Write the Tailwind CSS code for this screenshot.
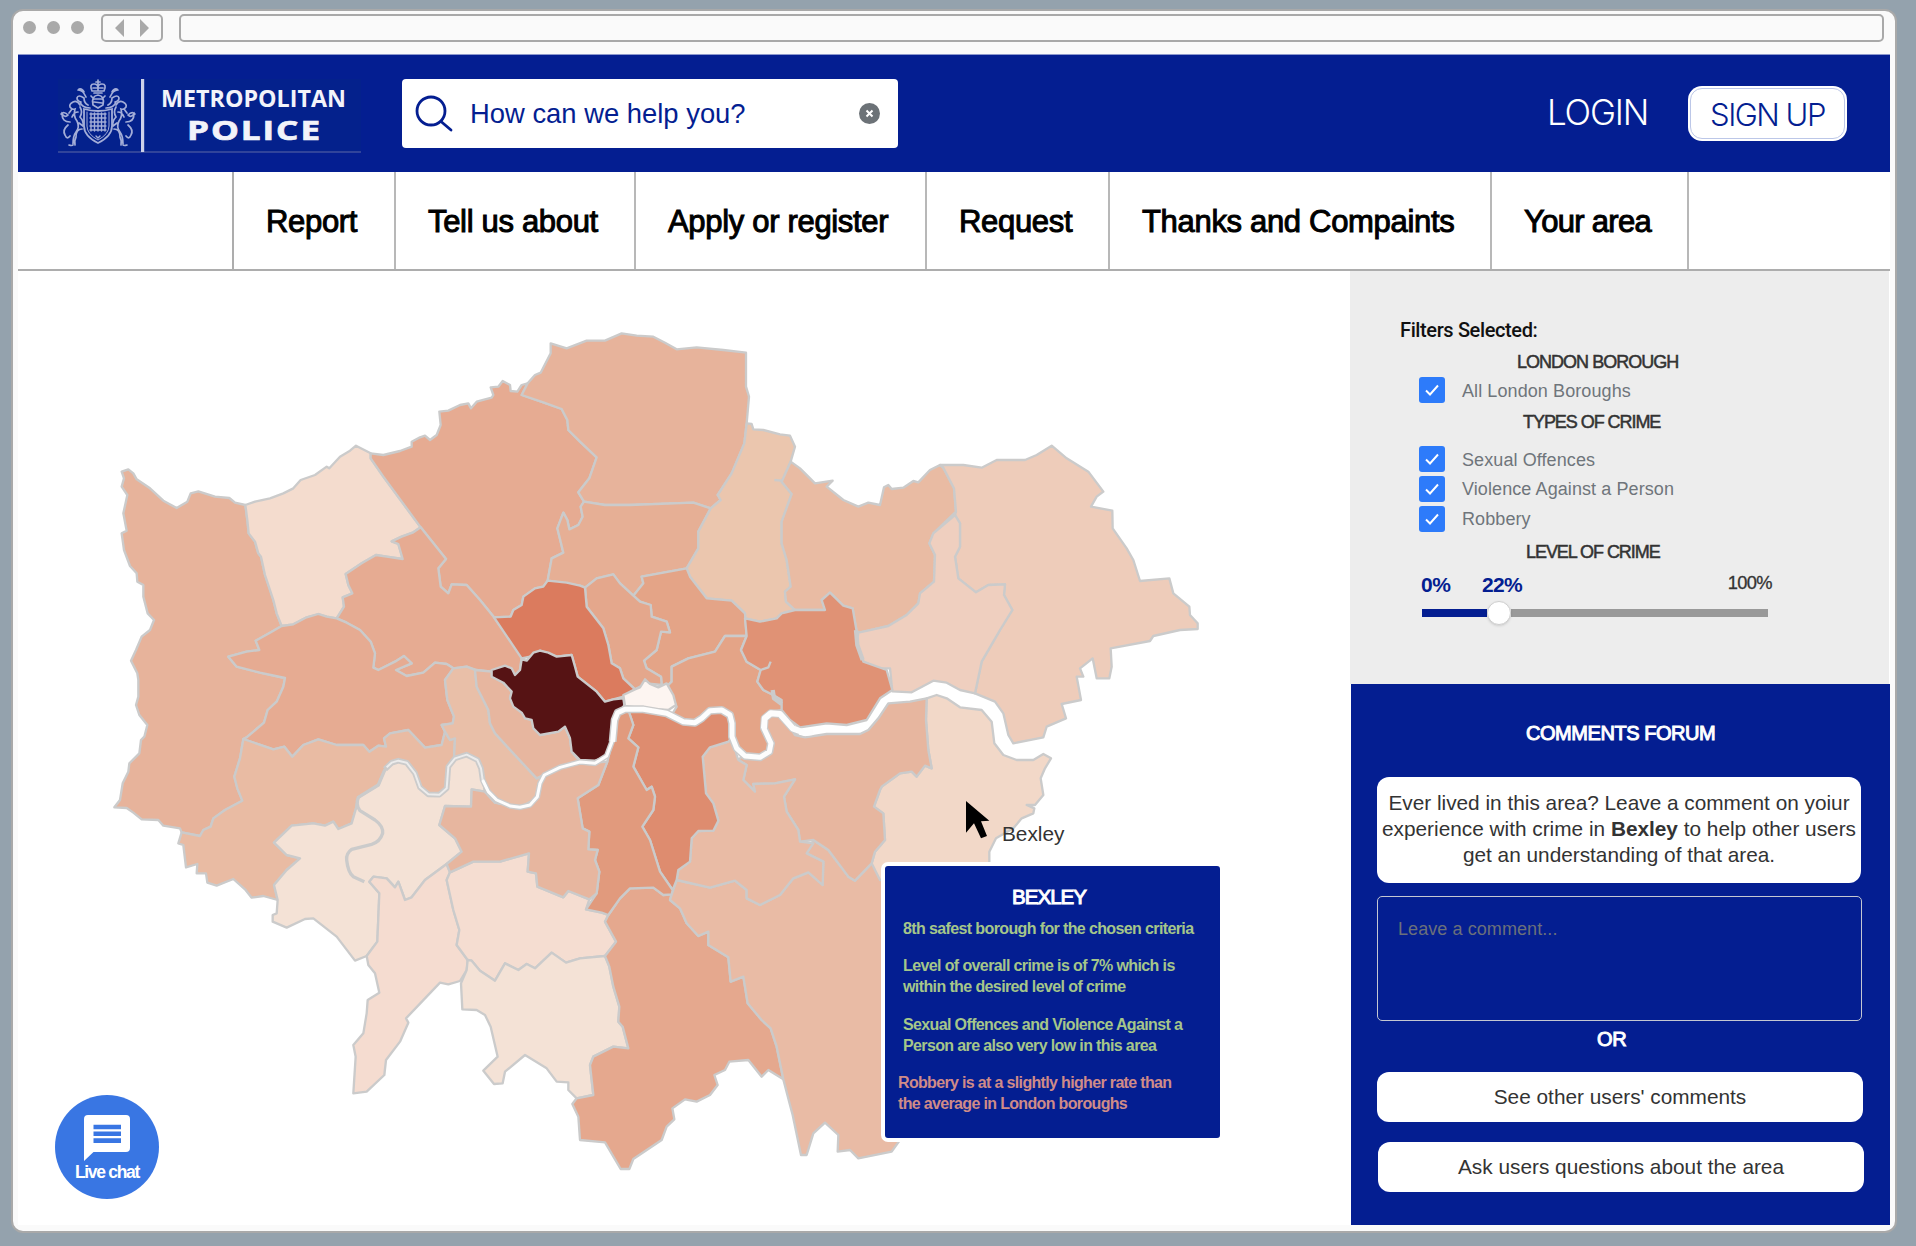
<!DOCTYPE html>
<html lang="en">
<head>
<meta charset="utf-8">
<title>Metropolitan Police - Your area</title>
<script src="https://cdn.jsdelivr.net/npm/@tailwindcss/browser@4"></script>
</head>
<body class="flex h-[1246px] w-[1916px] overflow-hidden bg-[#94a2ad] pt-[9px] pl-[11px] font-['Liberation_Sans',Arial,sans-serif]">
<div class="flex h-[1224px] w-[1886px] flex-col rounded-xl border-2 border-[#a9a9a9] bg-[#fafafa] px-[5px]">

  <!-- browser chrome -->
  <div class="flex h-[43px] shrink-0 items-start pt-[3px] pl-[5px]">
    <div class="mt-[7px] flex gap-[11px]">
      <span class="size-[13px] rounded-full bg-[#a9a9a9]"></span>
      <span class="size-[13px] rounded-full bg-[#a9a9a9]"></span>
      <span class="size-[13px] rounded-full bg-[#a9a9a9]"></span>
    </div>
    <div class="ml-[17px] flex h-7 w-[62px] items-center justify-center rounded-[5px] border-2 border-[#a9a9a9]">
      <svg class="h-[18px] w-[36px]" viewBox="0 0 36 18" fill="#a9a9a9"><path d="M10 0V18L1 9ZM26 0V18L35 9Z"/></svg>
    </div>
    <div class="ml-[16px] h-7 w-[1705px] rounded-[5px] border-2 border-[#a9a9a9]"></div>
  </div>

  <!-- header -->
  <header class="flex h-[118px] w-[1872px] shrink-0 items-start border-t border-[#8d98cd] bg-[#041e91]">
    <svg class="mt-[24px] ml-[40px] h-[74px] w-[304px]" viewBox="0 0 304 74">
      <rect width="303" height="73" fill="#04218c"/>
      <path d="M0 73H303" stroke="#3f519f" stroke-width="1.3"/>
      <rect x="83" width="3.2" height="73" fill="#cdd1e8"/>
      <g fill="none" stroke="#a3add8" stroke-width="1.7" stroke-linecap="round">
        <path d="M40 1v4M38 3h4M34 12q-3-7 2-7q4 0 4 4q0-4 4-4q5 0 2 7zM40 6v6M35 9h10M36 14h8"/>
        <path d="M35 26q-2-9 5-10q7 1 5 10l-5 3zM37 20h6M36 23l8 1M33 17l3 3M47 17l-3 3"/>
        <path d="M26 30q14 4 28 0V47q0 10-14 17Q26 57 26 47Z" stroke-width="1.8"/>
        <path d="M29 33V47q0 8 11 14Q51 55 51 47V33" stroke-width="1"/>
        <path d="M33 34V52M36.500 34V52M40 34V52M43.500 34V52M47 34V52M32 35H48M32 39H48M32 43H48M32 47H48M32 51H48M38 57l2 2 2-2" stroke-width="1.400"/>
        <path d="M30 26q-4-2-4-7q-6-4-7 0q0 3 4 4M28 18q-3-7-8-7M32 29q-8 0-10-6M26 13q-2-4-5-3M50 26q4-2 4-7q6-4 7 0q0 3-4 4M52 18q3-7 8-7M48 29q8 0 10-6M54 13q2-4 5-3"/>
        <path d="M22 26q-3-5-7-3q-4 2-3 5q2 3 5 2q-2 7 2 12q3 6-1 11q-3 4-3 12M15 66q-1 1-4 0M22 28q3 5 0 10q4 4 3 9M24 50q-6 0-6 8q-2 4-1 8M12 43q-8 0-8-8q3 4 6 1q-4-4-7-1M10 46q-6 5-3 10q2 5 5 1M20 33q-4 0-6 5M21 44l4 3M14 30l-3 4"/>
        <path d="M58 26q3-5 7-3q4 2 3 5q-2 3-5 2q2 7-2 12q-3 6 1 11q3 4 3 12M65 66q1 1 4 0M58 28q-3 5 0 10q-4 4-3 9M56 50q6 0 6 8q2 4 1 8M68 43q8 0 8-8q-3 4-6 1q4-4 7-1M70 46q6 5 3 10q-2 5-5 1M60 33q4 0 6 5M59 44l-4 3M66 30l3 4"/>
      </g>
      <g fill="#f2f3fa" font-family="'Open Sans','Noto Sans',sans-serif" font-weight="700">
        <text x="103" y="28" font-size="22.500" textLength="185" lengthAdjust="spacingAndGlyphs">METROPOLITAN</text>
        <text x="129" y="61" font-size="27" textLength="135" letter-spacing="1.500" stroke="#f2f3fa" stroke-width="0.700" lengthAdjust="spacingAndGlyphs">POLICE</text>
      </g>
    </svg>
    <div class="mt-[24px] ml-[40px] flex h-[69px] w-[496px] items-center rounded-[4px] bg-white pl-[13px]">
      <svg class="size-[38px]" viewBox="0 0 38 38" fill="none" stroke="#041e91" stroke-width="2.800" stroke-linecap="round"><circle cx="16" cy="16" r="14"/><path d="M26 26.500L36 35"/></svg>
      <span class="ml-[17px] text-[27.400px] leading-none whitespace-nowrap text-[#041e91]">How can we help you?</span>
      <svg class="mr-[18px] ml-auto size-[21px]" viewBox="0 0 21 21"><circle cx="10.500" cy="10.500" r="10.500" fill="#6c7277"/><path d="M7.500 7.500l6 6M13.500 7.500l-6 6" stroke="#fff" stroke-width="2"/></svg>
    </div>
    <span class="mt-[36px] ml-[649px] w-[104px] font-['Inter'] text-[35px] leading-[42px] font-light tracking-[-1.200px] whitespace-nowrap text-white">LOGIN</span>
    <div class="mt-[31px] ml-[37px] flex h-[55px] w-[159px] rounded-[14px] bg-white p-[2px]">
      <div class="flex flex-1 items-center justify-center rounded-[12px] border border-[#bcc7e8] pt-[2px] font-['Inter'] text-[31px] leading-none font-light tracking-[-1.500px] whitespace-nowrap text-[#041e91]">SIGN UP</div>
    </div>
  </header>

  <!-- main navigation -->
  <nav class="flex h-[99px] w-[1872px] shrink-0 border-b-2 border-[#adadad] bg-white text-[31px] tracking-[-0.320px] whitespace-nowrap text-black [-webkit-text-stroke:1px_#000]">
    <div class="w-[214px]"></div>
    <div class="flex w-[162px] items-center border-l-2 border-[#adadad] pt-[3px] pl-[32px]">Report</div>
    <div class="flex w-[240px] items-center border-l-2 border-[#b8b8b8] pt-[3px] pl-[32px]">Tell us about</div>
    <div class="flex w-[291px] items-center border-l-2 border-[#b8b8b8] pt-[3px] pl-[32px]">Apply or register</div>
    <div class="flex w-[183px] items-center border-l-2 border-[#b8b8b8] pt-[3px] pl-[32px]">Request</div>
    <div class="flex w-[382px] items-center border-l-2 border-[#b8b8b8] pt-[3px] pl-[32px]">Thanks and Compaints</div>
    <div class="flex w-[197px] items-center border-l-2 border-[#b8b8b8] pt-[3px] pl-[32px] tracking-[-0.700px]">Your area</div>
    <div class="flex-1 border-l-2 border-[#b8b8b8]"></div>
  </nav>

  <div class="flex h-[954px] w-[1872px] shrink-0 bg-white">
    <!-- borough map -->
    <main class="relative w-[1332px] overflow-hidden">
      <svg class="h-[954px] w-[1332px]" viewBox="54 813 3996 2862" stroke="#cbcbcb" stroke-width="7" stroke-linejoin="round" fill="none">
        <!-- Hillingdon -->
        <polygon fill="#e7b39b" points="365,1415 385,1408 400,1420 410,1438 450,1465 490,1502 530,1524 562,1505 572,1480 595,1474 645,1490 688,1494 705,1508 736,1515 742,1560 746,1600 765,1625 775,1660 783,1670 795,1725 820,1800 830,1840 845,1878 810,1898 767,1922 778,1950 740,1955 685,1970 710,2000 780,2018 855,2034 850,2060 830,2105 803,2130 792,2168 740,2212 730,2217 720,2275 703,2330 712,2365 727,2402 675,2430 640,2455 632,2480 610,2490 600,2508 545,2497 540,2485 490,2477 475,2460 425,2458 400,2438 380,2424 343,2422 360,2400 368,2350 385,2315 388,2290 418,2260 423,2220 433,2210 442,2175 418,2145 408,2115 415,2090 415,2040 412,2020 393,1982 408,1950 425,1910 450,1890 462,1860 443,1840 430,1790 430,1755 412,1745 410,1720 390,1698 372,1650 365,1600 380,1592 370,1540 382,1485 365,1460 372,1435"/>
        <!-- Harrow -->
        <polygon fill="#f4dcce" points="736,1515 765,1505 810,1495 850,1480 880,1465 902,1440 945,1425 980,1400 988,1405 1020,1370 1050,1352 1068,1337 1112,1360 1112,1375 1150,1430 1262,1582 1240,1597 1205,1610 1175,1624 1195,1632 1208,1677 1160,1670 1128,1665 1085,1690 1037,1722 1045,1755 1057,1780 1028,1792 1032,1820 1010,1855 980,1850 955,1842 920,1852 880,1873 845,1878 830,1840 820,1800 795,1725 783,1670 775,1660 765,1625 746,1600 742,1560"/>
        <!-- Barnet -->
        <polygon fill="#e6ab92" points="1112,1360 1150,1365 1200,1353 1235,1340 1235,1325 1260,1312 1275,1307 1290,1320 1310,1305 1322,1275 1318,1235 1345,1232 1380,1215 1405,1210 1413,1225 1430,1205 1475,1193 1480,1185 1472,1162 1495,1160 1508,1143 1530,1155 1532,1173 1552,1175 1565,1155 1583,1150 1565,1185 1630,1207 1685,1227 1702,1260 1705,1290 1740,1325 1790,1372 1768,1435 1735,1477 1752,1505 1742,1520 1748,1550 1735,1575 1708,1588 1702,1560 1690,1538 1672,1585 1682,1625 1690,1658 1655,1675 1643,1742 1630,1760 1605,1765 1570,1790 1565,1815 1540,1830 1532,1850 1482,1852 1440,1800 1400,1755 1355,1753 1345,1780 1322,1760 1315,1705 1338,1677 1262,1582 1150,1430 1112,1375"/>
        <!-- Brent -->
        <polygon fill="#e6ab92" points="1262,1582 1338,1677 1315,1705 1322,1760 1345,1780 1355,1753 1400,1755 1440,1800 1482,1852 1565,1970 1560,2010 1545,2025 1475,2015 1430,2010 1400,2000 1360,2005 1340,1992 1305,1988 1270,2018 1220,2028 1188,2010 1235,1990 1212,1968 1185,1985 1135,2010 1120,2003 1125,1960 1112,1925 1080,1890 1040,1868 1010,1855 1032,1820 1028,1792 1057,1780 1045,1755 1037,1722 1085,1690 1128,1665 1160,1670 1208,1677 1195,1632 1175,1624 1205,1610 1240,1597"/>
        <!-- Ealing -->
        <polygon fill="#e6ab92" points="845,1878 880,1873 920,1852 955,1842 980,1850 1010,1855 1040,1868 1080,1890 1112,1925 1125,1960 1120,2003 1135,2010 1185,1985 1212,1968 1235,1990 1188,2010 1220,2028 1270,2018 1305,1988 1340,1992 1360,2005 1335,2040 1342,2100 1362,2150 1358,2170 1325,2175 1335,2195 1325,2235 1275,2243 1225,2190 1170,2200 1152,2215 1158,2240 1135,2237 1108,2255 1090,2235 1010,2235 955,2218 910,2235 877,2270 853,2240 820,2248 730,2217 740,2212 792,2168 803,2130 830,2105 850,2060 855,2034 780,2018 710,2000 685,1970 740,1955 778,1950 767,1922 810,1898"/>
        <!-- Hounslow -->
        <polygon fill="#e9bba3" points="730,2217 820,2248 853,2240 877,2270 910,2235 955,2218 1010,2235 1090,2235 1108,2255 1135,2237 1158,2240 1152,2215 1170,2200 1225,2190 1275,2243 1325,2235 1335,2195 1350,2220 1365,2215 1362,2275 1345,2300 1347,2340 1335,2375 1300,2387 1265,2365 1245,2320 1225,2290 1195,2280 1155,2308 1135,2355 1075,2392 1068,2425 1055,2470 1015,2487 1000,2465 975,2477 940,2470 875,2477 822,2528 860,2565 900,2575 860,2610 822,2655 833,2700 790,2688 755,2693 735,2668 700,2637 650,2657 622,2648 618,2620 590,2620 592,2592 558,2602 550,2535 535,2530 545,2497 600,2508 610,2490 632,2480 640,2455 675,2430 727,2402 712,2365 703,2330 720,2275"/>
        <!-- Richmond -->
        <polygon fill="#f4e2d6" points="833,2700 822,2655 860,2610 900,2575 860,2565 822,2528 875,2477 940,2470 975,2477 1000,2465 1015,2487 1055,2470 1068,2425 1075,2392 1135,2355 1155,2308 1195,2280 1225,2290 1245,2320 1265,2365 1300,2387 1335,2375 1347,2340 1345,2300 1365,2275 1400,2262 1435,2280 1447,2330 1455,2375 1415,2368 1413,2420 1335,2418 1318,2475 1365,2515 1385,2555 1340,2592 1275,2640 1235,2692 1215,2700 1195,2645 1185,2662 1160,2635 1120,2630 1108,2645 1138,2680 1132,2825 1100,2868 1065,2882 1010,2810 940,2755 915,2757 860,2783 818,2765 818,2745 830,2740"/>
        <path stroke-width="10" d="M1155,2308L1135,2355L1075,2392Q1066,2415 1080,2432L1125,2460Q1150,2478 1148,2500Q1140,2526 1115,2533L1055,2548Q1038,2560 1040,2580Q1044,2618 1060,2630L1093,2645"/>
        <!-- Kingston -->
        <polygon fill="#f5dcd0" points="1108,2645 1120,2630 1160,2635 1185,2662 1195,2645 1215,2700 1235,2692 1275,2640 1340,2592 1350,2617 1340,2640 1360,2730 1378,2790 1370,2835 1403,2880 1400,2910 1380,2943 1345,2953 1320,2948 1275,2995 1218,3055 1225,3068 1200,3125 1158,3180 1153,3225 1100,3275 1060,3280 1067,3170 1060,3135 1090,3100 1100,3040 1103,3000 1138,2978 1125,2920 1105,2895 1100,2868 1132,2825 1138,2680"/>
        <!-- Merton -->
        <polygon fill="#f5ddd1" points="1350,2617 1420,2585 1500,2585 1587,2560 1583,2615 1608,2620 1612,2660 1690,2692 1705,2673 1768,2698 1758,2728 1805,2738 1825,2745 1815,2765 1848,2825 1815,2868 1740,2875 1698,2888 1655,2858 1605,2905 1580,2892 1555,2910 1515,2890 1485,2942 1440,2912 1415,2882 1403,2880 1370,2835 1378,2790 1360,2730 1340,2640"/>
        <!-- Sutton -->
        <polygon fill="#f4e2d6" points="1403,2880 1415,2882 1440,2912 1485,2942 1515,2890 1555,2910 1580,2892 1605,2905 1655,2858 1698,2888 1740,2875 1815,2868 1828,2900 1840,2960 1858,3020 1855,3065 1868,3080 1885,3145 1840,3140 1780,3170 1770,3195 1780,3285 1730,3295 1705,3270 1705,3247 1670,3245 1640,3205 1575,3165 1515,3215 1508,3250 1482,3252 1450,3212 1493,3170 1472,3080 1455,3045 1430,3030 1387,3028 1383,2950 1400,2910"/>
        <!-- Croydon -->
        <polygon fill="#e5a88e" points="1890,2665 1960,2663 1990,2685 2015,2683 2010,2700 2040,2725 2060,2770 2095,2808 2125,2795 2125,2835 2185,2872 2192,2945 2230,2930 2243,3010 2285,3060 2312,3085 2330,3140 2350,3238 2305,3210 2285,3230 2245,3180 2188,3185 2175,3210 2143,3225 2153,3255 2130,3285 2090,3305 2055,3298 2017,3325 2023,3358 2000,3380 1985,3420 1900,3477 1888,3507 1862,3507 1815,3427 1740,3420 1735,3350 1717,3312 1730,3295 1780,3285 1770,3195 1780,3170 1840,3140 1885,3145 1868,3080 1855,3065 1858,3020 1840,2960 1828,2900 1815,2868 1848,2825 1815,2765 1825,2745 1860,2695"/>
        <!-- Bromley -->
        <polygon fill="#e9bba5" points="2015,2683 2030,2640 2130,2663 2205,2642 2240,2670 2240,2695 2280,2715 2340,2685 2380,2635 2425,2617 2468,2655 2470,2585 2420,2560 2440,2520 2485,2550 2545,2630 2565,2642 2620,2585 2800,2640 2800,3300 2695,3427 2675,3455 2575,3475 2550,3450 2513,3455 2515,3405 2475,3368 2440,3400 2420,3465 2403,3465 2378,3345 2370,3315 2350,3238 2330,3140 2312,3085 2285,3060 2243,3010 2230,2930 2192,2945 2185,2872 2125,2835 2125,2795 2095,2808 2060,2770 2040,2725 2010,2700"/>
        <!-- Bexley -->
        <polygon fill="#f2d8c8" points="2780,2095 2810,2085 2840,2095 2880,2122 2945,2130 2975,2165 2983,2230 3010,2265 3050,2280 3100,2280 3130,2262 3153,2275 3135,2305 3122,2335 3130,2385 3105,2415 3080,2415 3103,2425 3100,2440 3065,2455 3040,2485 2988,2515 2968,2555 2968,2640 2640,2640 2615,2590 2625,2555 2655,2520 2650,2440 2622,2420 2640,2370 2645,2360 2700,2320 2735,2315 2750,2330 2775,2297 2795,2305 2785,2250 2778,2160"/>
        <!-- Greenwich -->
        <polygon fill="#e7b69f" points="2230,2265 2280,2270 2313,2245 2308,2205 2292,2170 2310,2135 2340,2135 2385,2205 2415,2212 2480,2202 2580,2202 2605,2190 2635,2155 2665,2110 2730,2105 2780,2095 2778,2160 2785,2250 2795,2305 2775,2297 2750,2330 2735,2315 2700,2320 2645,2360 2640,2370 2622,2420 2650,2440 2655,2520 2625,2555 2615,2590 2565,2642 2545,2630 2485,2550 2440,2520 2400,2525 2395,2490 2360,2435 2352,2390 2385,2338 2325,2350 2260,2352 2265,2375 2230,2340 2240,2295 2215,2280"/>
        <!-- Lewisham -->
        <polygon fill="#e9bba5" points="2185,2225 2198,2215 2210,2265 2215,2280 2240,2295 2230,2340 2265,2375 2260,2352 2325,2350 2385,2338 2352,2390 2360,2435 2395,2490 2400,2525 2440,2530 2420,2560 2470,2585 2468,2655 2425,2617 2380,2635 2340,2685 2280,2715 2240,2695 2240,2670 2205,2642 2130,2663 2030,2640 2035,2610 2070,2585 2075,2515 2095,2493 2140,2492 2155,2462 2140,2410 2118,2380 2108,2270 2130,2242"/>
        <!-- Southwark -->
        <polygon fill="#de8c6f" points="1885,2130 1930,2125 2000,2140 2050,2165 2085,2168 2130,2130 2165,2127 2195,2145 2198,2210 2185,2225 2130,2242 2108,2270 2118,2380 2140,2410 2155,2462 2140,2492 2095,2493 2075,2515 2070,2585 2035,2610 2030,2640 2018,2670 1980,2615 1950,2520 1927,2480 1960,2430 1965,2390 1955,2360 1940,2370 1900,2300 1915,2242 1885,2215 1900,2175"/>
        <!-- Lambeth -->
        <polygon fill="#e19a7d" points="1865,2128 1885,2130 1900,2175 1885,2215 1915,2242 1900,2300 1940,2370 1955,2360 1965,2390 1960,2430 1927,2480 1950,2520 1980,2615 2018,2670 2015,2683 1990,2685 1960,2663 1890,2665 1860,2695 1825,2745 1805,2738 1758,2728 1790,2680 1798,2615 1785,2580 1793,2550 1765,2548 1768,2495 1748,2485 1733,2395 1795,2355 1822,2285 1838,2220 1845,2150"/>
        <!-- Wandsworth -->
        <polygon fill="#e7b69f" points="1822,2285 1785,2288 1740,2285 1680,2300 1630,2325 1610,2395 1560,2422 1485,2408 1455,2375 1415,2368 1413,2420 1335,2418 1318,2475 1365,2515 1385,2555 1340,2592 1350,2617 1420,2585 1500,2585 1587,2560 1583,2615 1608,2620 1612,2660 1690,2692 1705,2673 1768,2698 1790,2680 1798,2615 1785,2580 1793,2550 1765,2548 1768,2495 1748,2485 1733,2395 1795,2355"/>
        <!-- Hammersmith -->
        <polygon fill="#e9bfa8" points="1360,2005 1400,2000 1425,2010 1430,2060 1465,2130 1470,2170 1485,2200 1540,2260 1610,2335 1630,2325 1610,2395 1560,2422 1485,2408 1455,2375 1447,2330 1435,2280 1400,2262 1362,2275 1365,2215 1350,2220 1335,2195 1325,2175 1358,2170 1362,2150 1342,2100 1335,2040"/>
        <!-- Kensington -->
        <polygon fill="#e7b69f" points="1425,2010 1475,2015 1510,2048 1535,2075 1530,2095 1565,2138 1595,2160 1620,2205 1675,2195 1695,2180 1710,2215 1715,2255 1740,2285 1680,2300 1630,2325 1610,2335 1540,2260 1485,2200 1470,2170 1465,2130 1430,2060"/>
        <!-- Enfield -->
        <polygon fill="#e7b39b" points="1583,1150 1605,1125 1622,1118 1652,1060 1652,1030 1700,1045 1760,1022 1815,1022 1865,1000 1910,1007 1960,1010 1995,1028 2030,1048 2090,1042 2170,1050 2238,1058 2238,1160 2247,1190 2240,1270 2233,1330 2195,1420 2153,1485 2162,1500 2132,1525 2080,1508 1890,1515 1815,1515 1752,1505 1735,1477 1768,1435 1790,1372 1740,1325 1705,1290 1702,1260 1685,1227 1630,1207 1565,1185"/>
        <!-- Haringey -->
        <polygon fill="#e6af95" points="1752,1505 1815,1515 1890,1515 2080,1508 2132,1525 2095,1595 2095,1645 2060,1705 1925,1730 1930,1750 1900,1787 1860,1750 1840,1723 1790,1735 1755,1763 1740,1757 1643,1742 1655,1675 1690,1658 1682,1625 1672,1585 1690,1538 1702,1560 1708,1588 1735,1575 1748,1550 1742,1520"/>
        <!-- Waltham Forest -->
        <polygon fill="#ebc6ae" points="2240,1270 2255,1272 2260,1288 2290,1290 2340,1303 2370,1307 2385,1340 2372,1385 2345,1445 2375,1482 2345,1565 2345,1630 2360,1680 2372,1760 2355,1775 2358,1805 2385,1830 2345,1840 2330,1855 2280,1865 2235,1855 2235,1840 2195,1802 2120,1795 2070,1730 2060,1705 2095,1645 2095,1595 2132,1525 2162,1500 2153,1485 2195,1420 2233,1330"/>
        <path d="M2323,1440L2345,1442"/>
        <!-- Redbridge -->
        <polygon fill="#e9bba3" points="2372,1385 2400,1405 2445,1450 2498,1442 2480,1460 2530,1500 2575,1520 2605,1508 2640,1515 2652,1462 2665,1455 2675,1467 2710,1463 2740,1443 2755,1447 2790,1410 2820,1395 2830,1403 2862,1465 2868,1535 2800,1600 2788,1630 2805,1665 2802,1745 2760,1780 2755,1810 2720,1845 2665,1878 2620,1888 2580,1898 2570,1895 2558,1825 2530,1817 2490,1778 2465,1800 2475,1830 2385,1830 2358,1805 2355,1775 2372,1760 2360,1680 2345,1630 2345,1565 2375,1482 2345,1445"/>
        <!-- Havering -->
        <polygon fill="#eeccba" points="2820,1395 2890,1395 2945,1403 2990,1380 3075,1380 3110,1365 3155,1337 3200,1375 3265,1415 3310,1475 3290,1490 3273,1520 3337,1532 3338,1585 3380,1645 3400,1680 3420,1743 3508,1735 3520,1780 3568,1820 3570,1845 3593,1870 3593,1887 3540,1890 3460,1908 3450,1923 3332,1945 3335,2000 3328,2035 3290,2035 3278,1975 3240,2005 3250,2030 3230,2030 3243,2100 3185,2112 3198,2155 3140,2180 3130,2212 3040,2230 3025,2205 3010,2140 2985,2105 2925,2080 2945,1985 3000,1890 3037,1830 3012,1785 3015,1753 2965,1755 2928,1777 2875,1735 2865,1670 2880,1640 2880,1570 2865,1545 2868,1535 2862,1465 2830,1403"/>
        <!-- Barking -->
        <polygon fill="#efcfbf" points="2865,1545 2880,1570 2880,1640 2865,1670 2875,1735 2928,1777 2965,1755 3015,1753 3012,1785 3037,1830 3000,1890 2945,1985 2925,2080 2880,2070 2840,2048 2800,2042 2735,2077 2677,2074 2670,2005 2635,2005 2590,1985 2570,1930 2575,1898 2620,1888 2665,1878 2720,1845 2755,1810 2760,1780 2802,1745 2805,1665 2788,1630 2800,1600"/>
        <!-- Hackney -->
        <polygon fill="#e4a487" points="1925,1730 2060,1705 2070,1730 2120,1795 2195,1802 2235,1840 2240,1908 2175,1908 2145,1955 2065,1975 2015,2000 2015,2045 2000,2060 1985,2055 1983,2030 1940,2005 1932,1982 1970,1950 1983,1895 2010,1897 2000,1865 1955,1850 1952,1815 1920,1805 1900,1787 1930,1750"/>
        <!-- Tower Hamlets -->
        <polygon fill="#e4a487" points="2240,1908 2175,1908 2145,1955 2065,1975 2015,2000 2015,2045 2000,2060 2030,2120 2015,2145 2050,2165 2085,2168 2130,2130 2165,2127 2195,2145 2198,2210 2230,2265 2280,2270 2313,2245 2308,2205 2292,2170 2310,2135 2350,2130 2345,2100 2320,2085 2290,2070 2272,2045 2282,2010 2240,1985 2223,1950"/>
        <!-- Newham -->
        <polygon fill="#e09275" points="2235,1855 2280,1865 2330,1855 2345,1840 2385,1830 2475,1830 2465,1800 2490,1778 2530,1817 2558,1825 2570,1895 2570,1930 2590,1985 2660,2010 2677,2070 2640,2095 2600,2160 2540,2175 2480,2170 2400,2182 2370,2160 2345,2130 2345,2100 2320,2085 2290,2070 2272,2045 2282,2010 2240,1985 2223,1950 2240,1908"/>
        <path stroke-width="13" d="M2568,1890L2572,1935L2588,1980M2318,2070L2322,2095L2345,2112"/>
        <path d="M2282,2010L2305,2002L2312,1985"/>
        <!-- Islington -->
        <polygon fill="#e4a78c" points="1755,1763 1790,1735 1840,1723 1860,1750 1900,1787 1920,1805 1952,1815 1955,1850 2000,1865 2010,1897 1983,1895 1970,1950 1932,1982 1940,2005 1983,2030 1985,2055 1940,2050 1905,2068 1870,2035 1860,2005 1835,1990 1825,1935 1810,1885 1760,1820"/>
        <!-- Camden -->
        <polygon fill="#db7b5e" points="1643,1742 1700,1748 1740,1757 1755,1763 1760,1820 1810,1885 1825,1935 1835,1990 1860,2005 1870,2035 1905,2068 1870,2090 1815,2105 1790,2075 1733,2030 1715,1965 1670,1970 1620,1952 1590,1970 1565,1975 1482,1852 1532,1850 1540,1830 1565,1815 1570,1790 1605,1765 1630,1760"/>
        <!-- Westminster -->
        <polygon fill="#561314" points="1475,2010 1515,1997 1535,2005 1545,2025 1560,2010 1565,1978 1580,1982 1600,1958 1620,1952 1645,1958 1670,1970 1715,1965 1725,2000 1733,2030 1790,2075 1815,2105 1840,2098 1870,2095 1873,2115 1865,2128 1845,2150 1838,2220 1820,2270 1785,2282 1740,2280 1715,2255 1710,2215 1695,2180 1675,2195 1620,2205 1600,2185 1595,2160 1575,2155 1565,2138 1540,2120 1530,2095 1535,2075 1510,2048 1475,2030"/>
        <!-- City of London -->
        <polygon fill="#fdf5f1" points="1870,2085 1905,2068 1920,2062 1935,2038 1950,2052 1975,2062 2000,2050 2020,2085 2028,2115 2005,2130 1930,2125 1875,2118"/>

        <!-- Thames -->
        <g>
          <polyline stroke-width="17" points="1155,2308 1175,2288 1195,2282 1220,2288 1245,2320 1260,2362 1285,2383 1318,2384 1340,2365 1345,2300 1365,2275 1400,2264 1432,2280 1443,2305 1448,2340 1465,2375 1490,2400 1530,2418 1560,2422 1590,2415 1612,2390 1620,2350 1633,2325 1680,2302 1740,2286 1785,2290 1820,2268 1838,2220 1843,2155"/>
          <polyline stroke-width="24" points="1838,2225 1844,2160 1853,2138 1875,2128 1930,2128 2000,2140 2050,2165 2085,2168 2105,2155 2130,2132 2165,2130 2190,2145 2196,2170 2196,2210 2210,2245 2235,2268 2280,2272 2308,2255 2313,2230 2292,2185 2294,2155 2312,2140 2340,2142 2378,2185 2400,2198"/>
        </g>
        <g stroke="#fdfdfd">
          <polyline stroke-width="6" stroke="#ececec" points="1160,2302 1175,2288 1195,2282 1220,2288 1245,2320 1260,2362 1285,2383 1318,2384 1340,2365 1345,2300 1365,2275 1400,2264 1432,2280 1443,2305 1448,2340 1465,2375 1490,2400"/>
          <polyline stroke-width="9" points="1448,2340 1465,2375 1490,2400 1530,2418 1560,2422 1590,2415 1612,2390 1620,2350 1633,2325 1680,2302 1740,2286 1785,2290 1820,2268 1838,2220 1843,2155"/>
          <polyline stroke-width="15" points="1838,2225 1844,2160 1853,2138 1875,2128 1930,2128 2000,2140 2050,2165 2085,2168 2105,2155 2130,2132 2165,2130 2190,2145 2196,2170 2196,2210 2210,2245 2235,2268 2280,2272 2308,2255 2313,2230 2292,2185 2294,2155 2312,2140"/>
          <polyline stroke-width="18" points="2292,2185 2294,2155 2312,2140 2340,2142 2378,2185 2415,2199 2440,2196"/>
        </g>
        <!-- pointer -->
        <polygon fill="#000" stroke="none" points="2898,2403 2968,2462 2943,2464 2961,2508 2943,2515 2922,2470 2898,2498"/>
      </svg>

      <span class="absolute top-[551px] left-[984px] text-[20.800px] leading-[24px] text-[#333]">Bexley</span>

      <section class="absolute top-[591px] left-[863px] flex h-[280px] w-[343px] flex-col rounded-[7px] border-4 border-white bg-[#041e91] text-[16px] leading-[21px] font-bold tracking-[-0.630px] whitespace-nowrap text-[#a5c68a]">
        <h2 class="mt-[19px] ml-[127px] text-[20.500px] leading-[24px] font-normal tracking-[-0.950px] text-white [-webkit-text-stroke:1px_#fff]">BEXLEY</h2>
        <p class="mt-[9px] ml-[18px] tracking-[-0.620px]">8th safest borough for the chosen criteria</p>
        <p class="mt-[16px] ml-[18px] tracking-[-0.610px]">Level of overall crime is of 7% which is<br>within the desired level of crime</p>
        <p class="mt-[17px] ml-[18px]">Sexual Offences and Violence Against a<br>Person are also very low in this area</p>
        <p class="mt-[16px] ml-[13px] tracking-[-0.660px] text-[#cf8b88]">Robbery is at a slightly higher rate than<br>the average in London boroughs</p>
      </section>

      <button class="absolute top-[824px] left-[37px] flex size-[104px] flex-col items-center rounded-full bg-[#3976e3] pt-[20px]">
        <svg class="h-[46px] w-[46px]" viewBox="0 0 46 46"><path d="M4 0H42a4 4 0 0 1 4 4V33a4 4 0 0 1-4 4H9.500L0 46V4a4 4 0 0 1 4-4Z" fill="#fff"/><path d="M9.500 12H37M9.500 18.800H37M9.500 25.600H37" stroke="#3976e3" stroke-width="4.600"/></svg>
        <span class="pt-px text-[17.500px] leading-[20px] font-bold tracking-[-1.300px] whitespace-nowrap text-white">Live chat</span>
      </button>
    </main>

    <aside class="flex w-[540px] flex-col">
      <!-- filters -->
      <section class="flex h-[413px] w-[539px] shrink-0 flex-col bg-[#ededed] text-[18px] whitespace-nowrap text-[#333]">
        <h2 class="mt-[47px] ml-[50px] font-['Roboto'] text-[20px] leading-[24px] font-medium tracking-[-0.380px] text-[#111]">Filters Selected:</h2>
        <h3 class="mt-[10px] ml-[167px] leading-[20px] tracking-[-0.980px] [-webkit-text-stroke:0.5px_#333]">LONDON BOROUGH</h3>
        <label class="mt-[5px] ml-[69px] flex h-[26px] items-center text-[#6f757b]">
          <svg class="mr-[17px] size-[26px] rounded-[3px] bg-[#2d7bfa]" viewBox="0 0 26 26" fill="none" stroke="#fff" stroke-width="1.900"><path d="M7 13.500L11 17.500L19 8.500"/></svg><span class="pt-[2px] tracking-[0.090px]">All London Boroughs</span></label>
        <h3 class="mt-[9px] ml-[173px] leading-[20px] tracking-[-1.050px] [-webkit-text-stroke:0.5px_#333]">TYPES OF CRIME</h3>
        <label class="mt-[14px] ml-[69px] flex h-[26px] items-center text-[#6f757b]">
          <svg class="mr-[17px] size-[26px] rounded-[3px] bg-[#2d7bfa]" viewBox="0 0 26 26" fill="none" stroke="#fff" stroke-width="1.900"><path d="M7 13.500L11 17.500L19 8.500"/></svg><span class="pt-[2px] tracking-[0.090px]">Sexual Offences</span></label>
        <label class="mt-[4px] ml-[69px] flex h-[26px] items-center text-[#6f757b]">
          <svg class="mr-[17px] size-[26px] rounded-[3px] bg-[#2d7bfa]" viewBox="0 0 26 26" fill="none" stroke="#fff" stroke-width="1.900"><path d="M7 13.500L11 17.500L19 8.500"/></svg><span class="tracking-[0.090px]">Violence Against a Person</span></label>
        <label class="mt-[4px] ml-[69px] flex h-[26px] items-center text-[#6f757b]">
          <svg class="mr-[17px] size-[26px] rounded-[3px] bg-[#2d7bfa]" viewBox="0 0 26 26" fill="none" stroke="#fff" stroke-width="1.900"><path d="M7 13.500L11 17.500L19 8.500"/></svg><span class="tracking-[0.090px]">Robbery</span></label>
        <h3 class="mt-[10px] ml-[176px] leading-[20px] tracking-[-1.050px] [-webkit-text-stroke:0.5px_#333]">LEVEL OF CRIME</h3>
        <div class="mt-[10px] ml-[71px] flex h-[26px] w-[351px] items-start">
          <span class="w-[61px] text-[21px] leading-[26px] font-bold tracking-[-0.500px] text-[#041e91]">0%</span>
          <span class="text-[21px] leading-[26px] font-bold tracking-[-0.700px] text-[#041e91]">22%</span>
          <span class="ml-auto text-[18.300px] leading-[22px] tracking-[-0.600px] [-webkit-text-stroke:0.3px_#333]">100%</span>
        </div>
        <div class="mt-[3px] ml-[72px] flex h-[24px] w-[346px] items-center">
          <div class="h-[8px] w-[65px] bg-[#041e91]"></div>
          <div class="z-10 size-[24px] shrink-0 rounded-full border border-[#cfcfcf] bg-white shadow"></div>
          <div class="h-[8px] flex-1 bg-[#999]"></div>
        </div>
      </section>

      <!-- comments -->
      <section class="ml-[1px] flex h-[541px] w-[539px] shrink-0 flex-col bg-[#041e91] pl-[26px] text-[20.800px] whitespace-nowrap text-[#333]">
        <h2 class="mt-[37px] ml-[149px] text-[20px] leading-[24px] tracking-[-0.450px] text-white [-webkit-text-stroke:1px_#fff]">COMMENTS FORUM</h2>
        <p class="mt-[32px] flex h-[106px] w-[484px] shrink-0 items-center justify-center rounded-[12px] bg-white pb-[2px] text-center leading-[26px]"><span>Ever lived in this area? Leave a comment on yoiur<br>experience with crime in <b>Bexley</b> to help other users<br>get an understanding of that area.</span></p>
        <div class="mt-[13px] h-[125px] w-[485px] shrink-0 rounded-[5px] border-[1.500px] border-[#c4c7d2] pt-[20px] pl-[20px] text-[18px] leading-[24px] tracking-[0.080px] text-[#6b707a]">Leave a comment...</div>
        <div class="mt-[6px] ml-[220px] text-[20px] leading-[24px] tracking-[-0.300px] text-white [-webkit-text-stroke:1px_#fff]">OR</div>
        <button class="mt-[21px] h-[50px] w-[486px] shrink-0 rounded-[12px] bg-white">See other users' comments</button>
        <button class="mt-[20px] ml-[1px] h-[50px] w-[486px] shrink-0 rounded-[12px] bg-white">Ask users questions about the area</button>
      </section>
    </aside>
  </div>
</div>
</body>
</html>
